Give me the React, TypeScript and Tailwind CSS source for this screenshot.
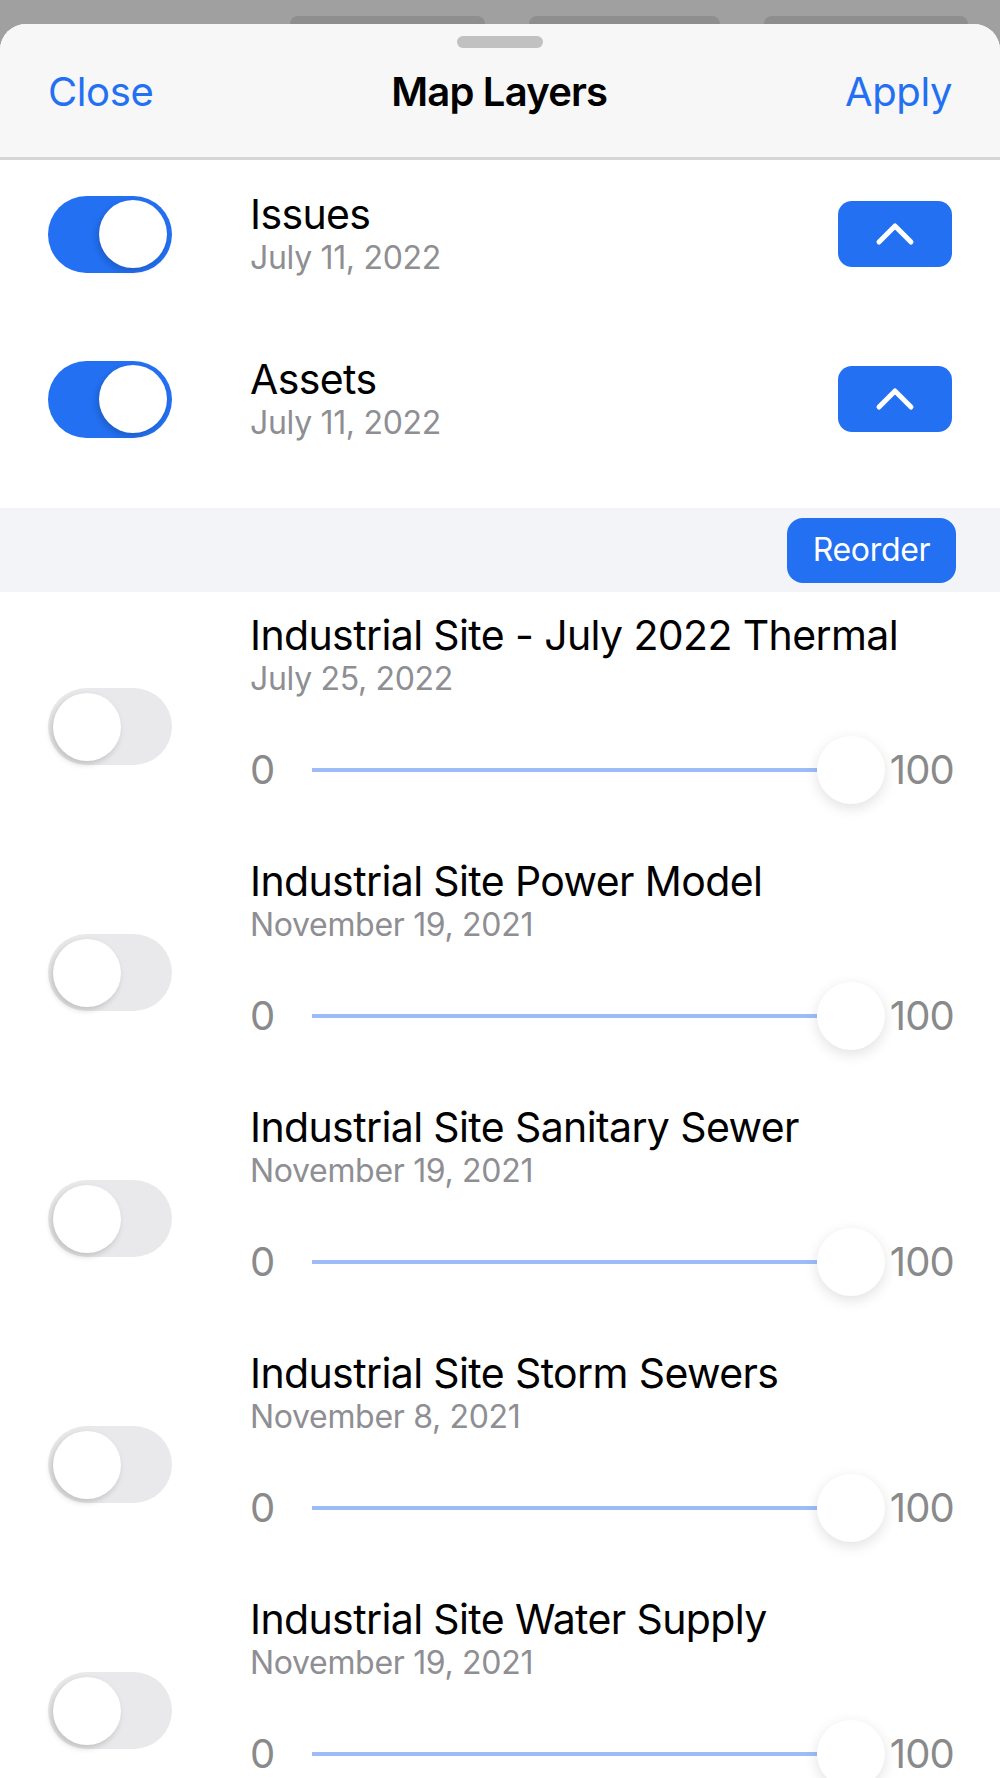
const pinned = [
  { name: "Issues", date: "July 11, 2022" },
  { name: "Assets", date: "July 11, 2022" },
];

const layers = [
  { name: "Industrial Site - July 2022 Thermal", date: "July 25, 2022" },
  { name: "Industrial Site Power Model", date: "November 19, 2021" },
  { name: "Industrial Site Sanitary Sewer", date: "November 19, 2021" },
  { name: "Industrial Site Storm Sewers", date: "November 8, 2021" },
  { name: "Industrial Site Water Supply", date: "November 19, 2021" },
];

function Toggle({ on }: { on: boolean }) {
  return (
    <div
      className={
        on
          ? "flex h-[77px] w-[124px] shrink-0 items-center justify-end rounded-full bg-[#2370f2] pr-[5px]"
          : "flex h-[77px] w-[124px] shrink-0 items-center justify-start rounded-full bg-[#e9e9eb] pl-[5px]"
      }
    >
      <div className="h-[68px] w-[68px] rounded-full bg-white shadow-[-2px_3px_6px_rgba(0,0,0,0.18)]" />
    </div>
  );
}

function Slider() {
  return (
    <div className="mt-[37px] flex h-[68px] items-center">
      <span className="w-[62px] text-[40px] leading-none text-[#8a8a8a]">0</span>
      <div className="flex flex-1 items-center">
        <div className="h-[4px] flex-1 bg-[#9dbcf7]" />
        <div className="h-[68px] w-[68px] rounded-full bg-white shadow-[0_4px_14px_rgba(0,0,0,0.12)]" />
      </div>
      <span className="ml-[5px] text-[40px] leading-none tracking-[-0.02em] text-[#8a8a8a]">100</span>
    </div>
  );
}

function Title({ children }: { children: string }) {
  return <div className="text-[41px] font-normal leading-[48px] tracking-[-0.015em] text-black">{children}</div>;
}

function DateLine({ children }: { children: string }) {
  return <div className="text-[32px] leading-[40px] tracking-[-0.01em] text-[#8e8e93]">{children}</div>;
}

export default function App() {
  return (
    <div className="h-[1778px] overflow-hidden bg-[#a0a0a0] font-['Inter','Liberation_Sans',sans-serif]">
      <div className="flex h-[24px] items-end gap-[44px] pl-[290px]">
        <div className="h-[8px] w-[195px] rounded-t-[30px] bg-[#8e8e8e]" />
        <div className="h-[8px] w-[191px] rounded-t-[30px] bg-[#8e8e8e]" />
        <div className="h-[8px] w-[204px] rounded-t-[30px] bg-[#8e8e8e]" />
      </div>

      <div className="overflow-hidden rounded-t-[26px] bg-white">
        {/* header */}
        <div className="h-[136px] border-b-[3px] border-[#d6d6d8] bg-[#f7f7f7] px-[48px]">
          <div className="flex justify-center pt-[12px]">
            <div className="h-[12px] w-[86px] rounded-full bg-[#c1c1c1]" />
          </div>
          <div className="mt-[20px] flex items-center justify-between">
            <button className="text-[40px] leading-[48px] tracking-[-0.01em] text-[#2370f2]">Close</button>
            <h1 className="text-[40px] font-semibold leading-[48px] tracking-[-0.02em] text-black">Map Layers</h1>
            <button className="text-[40px] leading-[48px] tracking-[-0.01em] text-[#2370f2]">Apply</button>
          </div>
        </div>

        {/* pinned layers */}
        <div className="flex flex-col gap-[77px] pb-[65px] pl-[48px] pr-[48px] pt-[30px]">
          {pinned.map((p) => (
            <div key={p.name} className="flex items-center">
              <Toggle on />
              <div className="ml-[78px] flex-1">
                <Title>{p.name}</Title>
                <DateLine>{p.date}</DateLine>
              </div>
              <button className="flex h-[66px] w-[114px] items-center justify-center rounded-[14px] bg-[#2370f2]">
                <svg width="40" height="24" viewBox="0 0 40 24" fill="none">
                  <path d="M4 20 L20 4 L36 20" stroke="white" strokeWidth="5" strokeLinecap="round" strokeLinejoin="round" />
                </svg>
              </button>
            </div>
          ))}
        </div>

        <div className="flex h-[84px] items-center justify-end bg-[#f3f4f8] pr-[44px]">
          <button className="h-[65px] w-[169px] rounded-[16px] bg-[#2370f2] text-[32px] tracking-[-0.01em] text-white">
            Reorder
          </button>
        </div>

        {/* overlay layers */}
        <div className="flex flex-col">
          {layers.map((l) => (
            <div key={l.name} className="flex h-[246px] items-start pl-[48px] pr-[46px] pt-[19px]">
              <div className="mt-[77px]">
                <Toggle on={false} />
              </div>
              <div className="ml-[78px] flex-1">
                <Title>{l.name}</Title>
                <DateLine>{l.date}</DateLine>
                <Slider />
              </div>
            </div>
          ))}
        </div>
      </div>
    </div>
  );
}
